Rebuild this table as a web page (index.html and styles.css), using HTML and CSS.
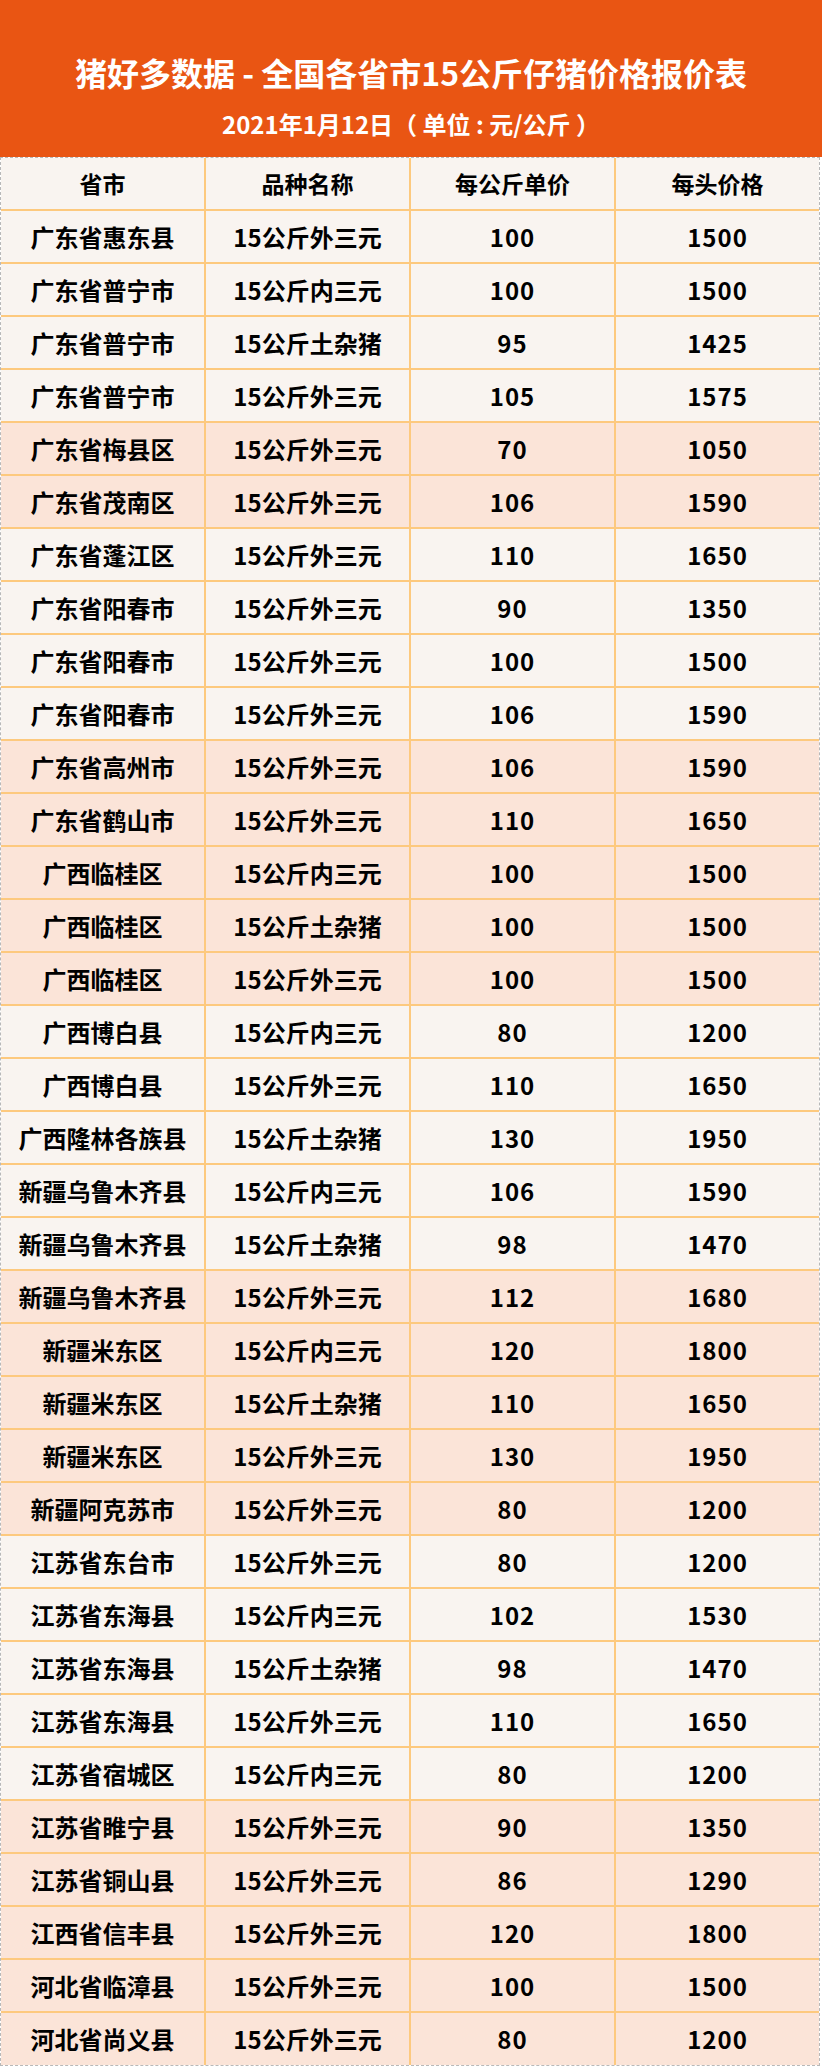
FILE: index.html
```html
<!DOCTYPE html>
<html lang="zh-CN">
<head>
<meta charset="utf-8">
<title>猪好多数据</title>
<link rel="stylesheet" href="styles.css">
</head>
<body>
<div class="page">
  <header class="banner">
    <h1 class="title">猪好多数据 - 全国各省市15公斤仔猪价格报价表</h1>
    <p class="subtitle">2021年1月12日（ 单位 : 元/公斤 ）</p>
  </header>
  <div class="table">
    <div class="row head"><div class="cell">省市</div><div class="cell">品种名称</div><div class="cell">每公斤单价</div><div class="cell">每头价格</div></div>
    <div class="row"><div class="cell">广东省惠东县</div><div class="cell kind">15公斤外三元</div><div class="cell num">100</div><div class="cell num">1500</div></div>
    <div class="row"><div class="cell">广东省普宁市</div><div class="cell kind">15公斤内三元</div><div class="cell num">100</div><div class="cell num">1500</div></div>
    <div class="row"><div class="cell">广东省普宁市</div><div class="cell kind">15公斤土杂猪</div><div class="cell num">95</div><div class="cell num">1425</div></div>
    <div class="row"><div class="cell">广东省普宁市</div><div class="cell kind">15公斤外三元</div><div class="cell num">105</div><div class="cell num">1575</div></div>
    <div class="row alt"><div class="cell">广东省梅县区</div><div class="cell kind">15公斤外三元</div><div class="cell num">70</div><div class="cell num">1050</div></div>
    <div class="row alt"><div class="cell">广东省茂南区</div><div class="cell kind">15公斤外三元</div><div class="cell num">106</div><div class="cell num">1590</div></div>
    <div class="row"><div class="cell">广东省蓬江区</div><div class="cell kind">15公斤外三元</div><div class="cell num">110</div><div class="cell num">1650</div></div>
    <div class="row"><div class="cell">广东省阳春市</div><div class="cell kind">15公斤外三元</div><div class="cell num">90</div><div class="cell num">1350</div></div>
    <div class="row"><div class="cell">广东省阳春市</div><div class="cell kind">15公斤外三元</div><div class="cell num">100</div><div class="cell num">1500</div></div>
    <div class="row"><div class="cell">广东省阳春市</div><div class="cell kind">15公斤外三元</div><div class="cell num">106</div><div class="cell num">1590</div></div>
    <div class="row alt"><div class="cell">广东省高州市</div><div class="cell kind">15公斤外三元</div><div class="cell num">106</div><div class="cell num">1590</div></div>
    <div class="row alt"><div class="cell">广东省鹤山市</div><div class="cell kind">15公斤外三元</div><div class="cell num">110</div><div class="cell num">1650</div></div>
    <div class="row alt"><div class="cell">广西临桂区</div><div class="cell kind">15公斤内三元</div><div class="cell num">100</div><div class="cell num">1500</div></div>
    <div class="row alt"><div class="cell">广西临桂区</div><div class="cell kind">15公斤土杂猪</div><div class="cell num">100</div><div class="cell num">1500</div></div>
    <div class="row alt"><div class="cell">广西临桂区</div><div class="cell kind">15公斤外三元</div><div class="cell num">100</div><div class="cell num">1500</div></div>
    <div class="row"><div class="cell">广西博白县</div><div class="cell kind">15公斤内三元</div><div class="cell num">80</div><div class="cell num">1200</div></div>
    <div class="row"><div class="cell">广西博白县</div><div class="cell kind">15公斤外三元</div><div class="cell num">110</div><div class="cell num">1650</div></div>
    <div class="row"><div class="cell">广西隆林各族县</div><div class="cell kind">15公斤土杂猪</div><div class="cell num">130</div><div class="cell num">1950</div></div>
    <div class="row"><div class="cell">新疆乌鲁木齐县</div><div class="cell kind">15公斤内三元</div><div class="cell num">106</div><div class="cell num">1590</div></div>
    <div class="row"><div class="cell">新疆乌鲁木齐县</div><div class="cell kind">15公斤土杂猪</div><div class="cell num">98</div><div class="cell num">1470</div></div>
    <div class="row alt"><div class="cell">新疆乌鲁木齐县</div><div class="cell kind">15公斤外三元</div><div class="cell num">112</div><div class="cell num">1680</div></div>
    <div class="row alt"><div class="cell">新疆米东区</div><div class="cell kind">15公斤内三元</div><div class="cell num">120</div><div class="cell num">1800</div></div>
    <div class="row alt"><div class="cell">新疆米东区</div><div class="cell kind">15公斤土杂猪</div><div class="cell num">110</div><div class="cell num">1650</div></div>
    <div class="row alt"><div class="cell">新疆米东区</div><div class="cell kind">15公斤外三元</div><div class="cell num">130</div><div class="cell num">1950</div></div>
    <div class="row alt"><div class="cell">新疆阿克苏市</div><div class="cell kind">15公斤外三元</div><div class="cell num">80</div><div class="cell num">1200</div></div>
    <div class="row"><div class="cell">江苏省东台市</div><div class="cell kind">15公斤外三元</div><div class="cell num">80</div><div class="cell num">1200</div></div>
    <div class="row"><div class="cell">江苏省东海县</div><div class="cell kind">15公斤内三元</div><div class="cell num">102</div><div class="cell num">1530</div></div>
    <div class="row"><div class="cell">江苏省东海县</div><div class="cell kind">15公斤土杂猪</div><div class="cell num">98</div><div class="cell num">1470</div></div>
    <div class="row"><div class="cell">江苏省东海县</div><div class="cell kind">15公斤外三元</div><div class="cell num">110</div><div class="cell num">1650</div></div>
    <div class="row"><div class="cell">江苏省宿城区</div><div class="cell kind">15公斤内三元</div><div class="cell num">80</div><div class="cell num">1200</div></div>
    <div class="row alt"><div class="cell">江苏省睢宁县</div><div class="cell kind">15公斤外三元</div><div class="cell num">90</div><div class="cell num">1350</div></div>
    <div class="row alt"><div class="cell">江苏省铜山县</div><div class="cell kind">15公斤外三元</div><div class="cell num">86</div><div class="cell num">1290</div></div>
    <div class="row alt"><div class="cell">江西省信丰县</div><div class="cell kind">15公斤外三元</div><div class="cell num">120</div><div class="cell num">1800</div></div>
    <div class="row alt"><div class="cell">河北省临漳县</div><div class="cell kind">15公斤外三元</div><div class="cell num">100</div><div class="cell num">1500</div></div>
    <div class="row alt last"><div class="cell">河北省尚义县</div><div class="cell kind">15公斤外三元</div><div class="cell num">80</div><div class="cell num">1200</div></div>
  </div>
</div>
</body>
</html>
```

FILE: styles.css
```css
html, body {
  margin: 0;
  padding: 0;
  background: #ffffff;
}
.page {
  width: 822px;
  font-family: "Noto Sans CJK SC", "Noto Sans", sans-serif;
  font-weight: 700;
  color: #000000;
}
.banner {
  height: 157px;
  background: #e95513;
  color: #ffffff;
  display: flex;
  flex-direction: column;
  align-items: center;
  box-sizing: border-box;
  padding-top: 50px;
}
.title {
  margin: 0;
  font-size: 32px;
  line-height: 44px;
  font-weight: 700;
}
.subtitle {
  margin: 14px 0 0 0;
  font-size: 24px;
  line-height: 32px;
  font-weight: 700;
}
.table {
  width: 820px;
  border: 1px dashed #b8b8b8;
  box-sizing: border-box;
}
.row {
  display: grid;
  grid-template-columns: 205px 205px 205px 1fr;
  height: 53px;
  box-sizing: border-box;
  border-bottom: 2px solid #fdc97e;
  background: #f9f4f0;
}
.row.alt {
  background: #fbe4d8;
}
.row.last {
  border-bottom: none;
  height: 52px;
}
.cell {
  display: flex;
  align-items: center;
  justify-content: center;
  font-size: 24px;
  line-height: 1;
  border-right: 2px solid #fdc97e;
  box-sizing: border-box;
  white-space: nowrap;
}
.cell:last-child {
  border-right: none;
}
.head .cell {
  font-size: 23px;
}
.num {
  letter-spacing: 1px;
}
```
